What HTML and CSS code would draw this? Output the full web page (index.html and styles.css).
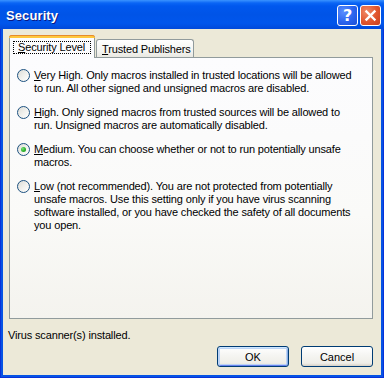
FILE: index.html
```html
<!DOCTYPE html>
<html>
<head>
<meta charset="utf-8">
<link rel="stylesheet" href="styles.css">
</head>
<body>
<div class="window">
  <div class="titlebar">
    <span class="title">Security</span>
    <div class="caption-buttons">
      <span class="cbtn help">?</span>
      <span class="cbtn close">
        <svg width="13" height="13" viewBox="0 0 13 13"><path d="M2.5 2.5 L10.5 10.5 M10.5 2.5 L2.5 10.5" stroke="#fff" stroke-width="2.4" stroke-linecap="square"/></svg>
      </span>
    </div>
  </div>
  <div class="client">
    <div class="tabs">
      <div class="tab selected"><span class="focus"><u>S</u>ecurity Level</span></div>
      <div class="tab"><span class="label"><u>T</u>rusted Publishers</span></div>
    </div>
    <div class="panel">
      <div class="option">
        <span class="radio"></span>
        <p class="otext"><u>V</u>ery High. Only macros installed in trusted locations will be allowed<br>to run. All other signed and unsigned macros are disabled.</p>
      </div>
      <div class="option">
        <span class="radio"></span>
        <p class="otext"><u>H</u>igh. Only signed macros from trusted sources will be allowed to<br>run. Unsigned macros are automatically disabled.</p>
      </div>
      <div class="option">
        <span class="radio checked"></span>
        <p class="otext"><u>M</u>edium. You can choose whether or not to run potentially unsafe<br>macros.</p>
      </div>
      <div class="option">
        <span class="radio"></span>
        <p class="otext"><u>L</u>ow (not recommended). You are not protected from potentially<br>unsafe macros. Use this setting only if you have virus scanning<br>software installed, or you have checked the safety of all documents<br>you open.</p>
      </div>
    </div>
    <div class="status">Virus scanner(s) installed.</div>
    <div class="buttons">
      <button class="btn default">OK</button>
      <button class="btn">Cancel</button>
    </div>
  </div>
</div>
</body>
</html>
```

FILE: styles.css
```css
* { box-sizing: border-box; }
html, body { margin: 0; padding: 0; }
body {
  font-family: "Liberation Sans", Arial, sans-serif;
  font-size: 11px;
  letter-spacing: -0.15px;
  color: #000;
  background: #fff;
}
.window {
  width: 384px;
  height: 378px;
  background: #0653E4;
  display: flex;
  flex-direction: column;
  border-left: 1px solid #0831D9;
  border-right: 1px solid #0831D9;
  border-bottom: 1px solid #0831D9;
}
.titlebar {
  height: 29px;
  flex: none;
  display: flex;
  align-items: center;
  justify-content: space-between;
  padding: 0 2px 0 6px;
  background: linear-gradient(#3A93FF 0, #0A65F5 3px, #0058EE 6px, #0054E7 50%, #0056EC 80%, #0049DA 100%);
  margin: 0 -1px;
}
.title {
  color: #fff;
  font-weight: bold;
  font-size: 13px;
  text-shadow: 1px 1px 0 #0A1883;
  letter-spacing: 0.1px;
  margin-top: 1px;
}
.caption-buttons {
  display: flex;
  gap: 2px;
  margin-top: 2px;
  margin-right: 1px;
}
.cbtn {
  width: 21px;
  height: 21px;
  border: 1px solid #fff;
  border-radius: 3px;
  display: flex;
  align-items: center;
  justify-content: center;
  color: #fff;
}
.help {
  background: radial-gradient(circle at 30% 30%, #5A8FFF 0, #2A64EE 55%, #1D4FD6 100%);
  font-family: "DejaVu Sans", sans-serif;
  font-weight: bold;
  font-size: 16px;
  line-height: 1;
}
.close {
  background: radial-gradient(circle at 30% 30%, #F08A68 0, #E0562E 55%, #C8401E 100%);
}
.client {
  flex: 1;
  margin: 0 2px 2px 2px;
  background: #ECE9D8;
  display: flex;
  flex-direction: column;
  padding: 6px 8px 0 6px;
}
.tabs {
  display: flex;
  align-items: flex-end;
  height: 22px;
  flex: none;
}
.tab {
  height: 18px;
  padding: 0 2px 0 5px;
  border: 1px solid #919B9C;
  border-bottom: none;
  border-radius: 3px 3px 0 0;
  background: linear-gradient(#FFFFFF, #F3F3EF 70%, #E9E8E1);
  display: flex;
  align-items: center;
  margin-left: 1px;
}
.tab.selected {
  height: 23px;
  margin-left: 0;
  margin-bottom: -1px;
  position: relative;
  z-index: 1;
  background: #FCFCFE;
  border-top: 3px solid #E68B2C;
  border-radius: 3px 3px 0 0;
  padding: 3px 3px 0 3px;
  align-items: flex-start;
}
.tab.selected::before {
  content: "";
  position: absolute;
  left: -1px;
  right: -1px;
  top: -3px;
  height: 2px;
  background: #FFC83C;
  border-radius: 3px 3px 0 0;
  border-top: 1px solid #E68B2C;
}
.focus {
  border: 1px dotted #000;
  padding: 0 5px 0 4px;
  line-height: 11px;
  height: 13px;
}
.panel {
  height: 262px;
  flex: none;
  border: 1px solid #919B9C;
  background: linear-gradient(#FCFCFE 0, #FAFAF8 60%, #F4F3EE 100%);
  padding: 11px 4px 0 7px;
  display: flex;
  flex-direction: column;
  gap: 11px;
}
.option {
  display: flex;
  align-items: flex-start;
  gap: 4px;
}
.radio {
  flex: none;
  width: 13px;
  height: 13px;
  border-radius: 50%;
  border: 1px solid #1C5180;
  background: linear-gradient(135deg, #DCDCD7 0, #F2F2EE 55%, #FFFFFF 100%);
  display: flex;
  align-items: center;
  justify-content: center;
}
.radio.checked::after {
  content: "";
  width: 5px;
  height: 5px;
  border-radius: 50%;
  background: radial-gradient(circle at 35% 35%, #7BE07B 0, #2FB52F 50%, #1A8E1A 100%);
}
.otext {
  margin: 0;
  line-height: 13px;
  flex: 1;
  white-space: nowrap;
}
.status {
  margin-top: 10px;
  margin-left: -1px;
  line-height: 13px;
}
.buttons {
  display: flex;
  justify-content: flex-end;
  gap: 12px;
  margin-top: 4px;
  padding-right: 0;
}
.btn {
  width: 72px;
  height: 21px;
  font-family: "Liberation Sans", Arial, sans-serif;
  font-size: 11px;
  color: #000;
  border: 1px solid #003C74;
  border-radius: 3px;
  background: linear-gradient(#FFFFFF 0, #F6F6F3 40%, #EFEEE8 85%, #D6D0C5 100%);
  padding: 0;
}
.btn.default {
  box-shadow: inset 0 1px 0 #CEE7FF, inset 1px 0 0 #BCD4F6, inset -1px 0 0 #89ADE4, inset 0 -1px 0 #6982EE, inset 0 0 0 2px #BCD4F6;
}
```
